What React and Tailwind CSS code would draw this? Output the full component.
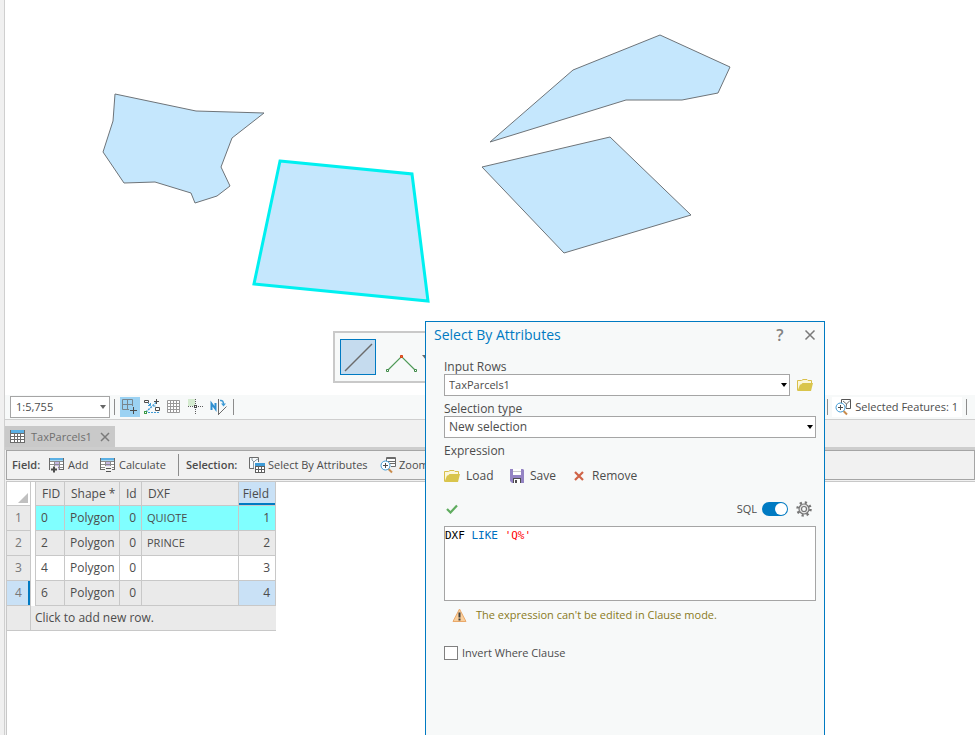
import { useState } from 'react';

const rows = [
  { fid: 0, shape: 'Polygon', id: 0, dxf: 'QUIOTE', field: 1 },
  { fid: 2, shape: 'Polygon', id: 0, dxf: 'PRINCE', field: 2 },
  { fid: 4, shape: 'Polygon', id: 0, dxf: '', field: 3 },
  { fid: 6, shape: 'Polygon', id: 0, dxf: '', field: 4 },
];

const rowColors = ['bg-[#80ffff]', 'bg-[#eaeaea]', 'bg-white', 'bg-[#eaeaea]'];

/* ---------- Icons ---------- */

const TableGrid = () => (
  <svg width="15" height="13" viewBox="0 0 15 13" aria-hidden="true">
    <rect x="0.5" y="0.5" width="14" height="12" fill="#fff" stroke="#6b6b6b" />
    <rect x="1" y="0" width="13" height="3" fill="#5bb0e4" />
    <path d="M0 3.5h15M1 6.5h13M1 9.5h13M4.5 4v9M7.5 4v9M10.5 4v9" stroke="#6b6b6b" />
  </svg>
);

const FieldIcon = ({ children }) => (
  <svg width="16" height="16" viewBox="0 0 16 16" aria-hidden="true">
    <rect x="0.5" y="1.5" width="14" height="11" fill="#fff" stroke="#6b6b6b" />
    <rect x="6" y="4" width="4" height="9" fill="#c5b6e3" />
    <rect x="1" y="1" width="13" height="2.5" fill="#5bb0e4" />
    <path d="M1 4.5h13M1 7.5h13M1 10.5h13M5.5 4v8M10.5 4v8" stroke="#8b8b8b" />
    {children}
  </svg>
);

const AddFieldIcon = () => (
  <FieldIcon>
    <path d="M1 9h8v7H1z" fill="#f1f1f1" />
    <path d="M5 9.5v6M2 12.5h6" stroke="#4c4c4c" strokeWidth="2" />
  </FieldIcon>
);

const CalculateIcon = () => (
  <FieldIcon>
    <path d="M5 9h7v7H5z" fill="#f1f1f1" />
    <path d="M6 11.5h5M6 14.5h5" stroke="#555" />
  </FieldIcon>
);

const SelectAttributesIcon = () => (
  <svg width="17" height="16" viewBox="0 0 17 16" aria-hidden="true">
    <path d="M5 11.5H0.5V0.5h9V5" fill="#f8fafb" stroke="#6b6b6b" />
    <path d="M3 1v2l2 2 2-2 2-1M4.500 5v6" fill="none" stroke="#8a9aa5" />
    <rect x="6.500" y="6.500" width="9" height="9" fill="#fff" stroke="#5f5f5f" />
    <rect x="6" y="6" width="10" height="3" fill="#3f9bd6" />
    <path d="M6 9.500h10M7 12.500h9M9.500 9v7M12.500 9v7" stroke="#5f5f5f" />
  </svg>
);

const Magnifier = () => (
  <>
    <path d="M8.500 12l3.500 3.500" stroke="#c98b4c" strokeWidth="2" />
    <circle cx="5.500" cy="8.500" r="4.500" fill="#fff" stroke="#3f9bd6" />
    <path d="M5.500 6v5M3 8.500h5" stroke="#4c4c4c" />
  </>
);

const ZoomTableIcon = () => (
  <svg width="17" height="17" viewBox="0 0 17 17" aria-hidden="true">
    <path d="M6.500 4V0.500h9v9H11" fill="#fff" stroke="#6b6b6b" />
    <path d="M7 1.500h8M8 4.500h7M10 6.500h5" stroke="#6b6b6b" />
    <Magnifier />
  </svg>
);

const ZoomSelectedIcon = () => (
  <svg width="17" height="17" viewBox="0 0 17 17" aria-hidden="true">
    <path d="M6.500 4V0.500h9v9H11" fill="#fff" stroke="#555" />
    <path d="M8 2l3.500 3L15 1.500M11.500 5L11 9" fill="none" stroke="#6b6b6b" />
    <Magnifier />
  </svg>
);

const SnapGridIcon = () => (
  <svg width="16" height="16" viewBox="0 0 16 16" aria-hidden="true">
    <path d="M0.500 0.500h10v10h-10zM5.500 0.500v10M0.500 5.500h10" fill="none" stroke="#78858d" />
    <path d="M7 7h9v9H7z" fill="#9bd2f3" />
    <path d="M11.500 8v7M8 11.500h7" stroke="#4c4c4c" />
  </svg>
);

const ConstraintIcon = () => (
  <svg width="16" height="16" viewBox="0 0 16 16" aria-hidden="true">
    <path d="M2 13L12 3.500" stroke="#3f9bd6" strokeWidth="1.500" strokeDasharray="2 1" />
    <path d="M4 4l2.500 2.500M6.500 4v2.500H4M9 7h2.500" fill="none" stroke="#3f9bd6" />
    <path d="M4 13.500h11" stroke="#3f9bd6" strokeDasharray="2 1" />
    <path d="M0.500 1.500h4v2h-4zM11.500 8.500h4v3h-4z" fill="#fff" stroke="#4c4c4c" />
    <path d="M12.500 0v5M10 2.500h5" stroke="#4c4c4c" />
    <rect x="0.500" y="12.500" width="2" height="2" fill="#fff" stroke="#3c9a48" />
  </svg>
);

const GridIcon = () => (
  <svg width="14" height="14" viewBox="0 0 14 14" aria-hidden="true">
    <path
      d="M0.500 0.500h12v12h-12zM3.500 0.500v12M6.500 0.500v12M9.500 0.500v12M0.500 3.500h12M0.500 6.500h12M0.500 9.500h12"
      fill="#fff"
      stroke="#999"
    />
  </svg>
);

const CrosshairIcon = () => (
  <svg width="16" height="16" viewBox="0 0 16 16" aria-hidden="true">
    <rect x="0" y="0" width="7" height="7" fill="#d5ecd0" />
    <path d="M7.500 0v16M0 7.500h16" stroke="#5c5c5c" strokeDasharray="1 1" />
    <rect x="6.500" y="6.500" width="2" height="2" fill="#fff" stroke="#4c4c4c" />
  </svg>
);

const NorthIcon = () => (
  <svg width="18" height="16" viewBox="0 0 18 16" aria-hidden="true">
    <path d="M1.500 11V4.500L5.500 10V4" fill="none" stroke="#2f8fd0" strokeWidth="2" />
    <path d="M8.500 0v16" stroke="#6b6b6b" />
    <path d="M9 15L16.500 7.500" stroke="#6b6b6b" />
    <path d="M10 1.500c2.500-.5 3.500 1 3.500 4" fill="none" stroke="#3f9bd6" strokeWidth="1.500" />
    <path d="M11 4.500h5L13.500 7.500z" fill="#3f9bd6" />
  </svg>
);

const FolderIcon = () => (
  <svg width="16" height="13" viewBox="0 0 16 13" aria-hidden="true">
    <path d="M0.500 11.500V1.500H4.500l1.500-1h4l1 1h3.500v3" fill="#fbf7dc" stroke="#d9c04a" />
    <path d="M4 5.500l1.500-1.500H16l-2 8H0.500L3 5.500z" fill="#d9c54c" />
  </svg>
);

const SaveIcon = () => (
  <svg width="14" height="14" viewBox="0 0 14 14" aria-hidden="true">
    <path d="M0 0h13l1 1v13H2l-2-2z" fill="#9484c4" />
    <rect x="3" y="0" width="8" height="6" fill="#fff" />
    <path d="M3 2.500h8" stroke="#c9c9c9" />
    <rect x="3" y="9" width="8" height="5" fill="#4f4f4f" />
    <rect x="4" y="10" width="6" height="4" fill="#fff" />
    <rect x="5" y="11" width="2" height="3" fill="#4f4f4f" />
  </svg>
);

const GearIcon = () => (
  <svg width="16" height="16" viewBox="0 0 16 16" aria-hidden="true">
    <circle cx="8" cy="8" r="6.500" fill="none" stroke="#757575" strokeWidth="2.500" strokeDasharray="2.200 2.905" />
    <circle cx="8" cy="8" r="5" fill="#e4e4e4" stroke="#757575" strokeWidth="1.200" />
    <circle cx="8" cy="8" r="2.500" fill="#f7f9f9" stroke="#757575" strokeWidth="1.200" />
  </svg>
);

const WarningIcon = () => (
  <svg width="15" height="15" viewBox="0 0 15 15" aria-hidden="true">
    <path d="M7.500 1L14 13.500H1z" fill="#fbcf9b" stroke="#e9a96b" strokeLinejoin="round" />
    <path d="M7.500 4.500v5M7.500 10.500v2" stroke="#3f3f3f" strokeWidth="2" />
  </svg>
);

const Caret = ({ className }) => (
  <svg
    width="6"
    height="4"
    viewBox="0 0 6 4"
    className={`absolute top-1/2 -translate-y-1/2 pointer-events-none ${className}`}
    aria-hidden="true"
  >
    <path d="M0 0h6L3 4z" fill="currentColor" />
  </svg>
);

const Divider = ({ className = 'h-4' }) => <span className={`w-px bg-[#8c8c8c] ${className}`} />;

/* ---------- Map ---------- */

const MapView = () => (
  <div className="flex-1 min-h-0 bg-white">
    <svg
      className="block w-full h-full"
      viewBox="5 0 970 395"
      preserveAspectRatio="xMinYMin meet"
      role="img"
      aria-label="Parcels map"
    >
      <g fill="#c5e7fd" stroke="#6e7479" strokeWidth="1">
        <polygon points="115,94 196,111 264,113 232,138 221,167 230,186 217,196 195,203 191,193 155,182 124,183 103,152 113,121" />
        <polygon points="490,142 573,70 660,35 730,67 718,93 682,100 626,100" />
        <polygon points="482,167 610,137 691,215 564,253" />
      </g>
      <polygon points="280,161 412,174 428,301 254,284" fill="#c5e7fd" stroke="#00f0f0" strokeWidth="3" />
    </svg>
  </div>
);

const SketchToolbar = () => (
  <div className="absolute left-[333px] top-[331px] flex items-center gap-2 w-32 h-[52px] px-[5px] bg-[#f7f9f9] border-2 border-[#c9c9c9]">
    <button aria-label="Line" className="w-9 h-9 shrink-0 bg-[#c5dbee] border border-[#007ac2]">
      <svg width="34" height="34" viewBox="0 0 34 34">
        <path d="M4 31L31 4" stroke="#6b6b6b" strokeWidth="1.500" />
      </svg>
    </button>
    <button aria-label="Vertices" className="shrink-0 pt-3">
      <svg width="34" height="20" viewBox="0 0 34 20">
        <path d="M3.500 17.500l14-14 14 14" fill="none" stroke="#4f9a58" strokeWidth="1.200" />
        <path d="M2.500 16.500h2v2h-2zM30.500 16.500h2v2h-2z" fill="#fff" stroke="#3f8a48" />
        <path d="M16.500 2.500h2v2h-2z" fill="#e86a3a" stroke="#d84315" />
      </svg>
    </button>
    <svg width="8" height="5" viewBox="0 0 8 5" className="shrink-0 -ml-1">
      <path d="M0 0h8L4 5z" fill="#6b6b6b" />
    </svg>
  </div>
);

const StatusBar = () => (
  <div className="flex items-center h-[25px] pl-[5px] pr-2 bg-[#f7f9f9] border-b border-[#cfcfcf] text-[11px]">
    <div className="relative w-[100px] shrink-0">
      <select
        aria-label="Map scale"
        className="block w-full h-[22px] pl-[5px] appearance-none bg-white border border-[#a5a5a5]"
      >
        <option>1:5,755</option>
      </select>
      <Caret className="right-1 text-[#666]" />
    </div>
    <div className="flex items-center ml-1">
      <Divider />
      <button aria-label="Snapping" className="flex items-center justify-center w-5 h-5 ml-[5px] bg-[#9bd2f3]">
        <SnapGridIcon />
      </button>
      <button aria-label="Dynamic constraints" className="ml-1">
        <ConstraintIcon />
      </button>
      <button aria-label="Grid" className="ml-[7px]">
        <GridIcon />
      </button>
      <button aria-label="Inference" className="ml-[7px]">
        <CrosshairIcon />
      </button>
      <button aria-label="Correction" className="ml-[6px]">
        <NorthIcon />
      </button>
      <Divider className="h-4 ml-[5px]" />
    </div>
    <div className="flex items-center ml-auto gap-1">
      <Divider />
      <button className="flex items-center gap-[3px] h-5 pl-[3px] pr-1 bg-white">
        <ZoomSelectedIcon />
        Selected Features: 1
      </button>
      <Divider />
    </div>
  </div>
);

/* ---------- Attribute table ---------- */

const TableToolbar = () => (
  <div className="flex items-center h-[30px] pl-[5px] border border-[#a5a5a5] overflow-hidden whitespace-nowrap text-[11px]">
    <span className="w-[37px] shrink-0 font-semibold">Field:</span>
    <button className="flex items-center gap-[3px] w-[51px] shrink-0">
      <AddFieldIcon />
      Add
    </button>
    <button className="flex items-center gap-[3px] w-[78px] shrink-0">
      <CalculateIcon />
      Calculate
    </button>
    <Divider className="h-[22px] shrink-0" />
    <span className="w-[63px] ml-[7px] shrink-0 font-semibold">Selection:</span>
    <button className="flex items-center gap-0.5 w-[131px] shrink-0">
      <SelectAttributesIcon />
      Select By Attributes
    </button>
    <button className="flex items-center gap-0.5 shrink-0">
      <ZoomTableIcon />
      Zoom To
    </button>
  </div>
);

const cell = 'border-r border-b border-[#c8c8c8] p-0';

const AttributeTable = () => (
  <table className="table-fixed w-[269px] border-separate border-spacing-0">
    <colgroup>
      <col className="w-6" />
      <col className="w-[5px]" />
      <col className="w-[29px]" />
      <col className="w-[55px]" />
      <col className="w-[22px]" />
      <col className="w-[97px]" />
      <col className="w-[37px]" />
    </colgroup>
    <thead>
      <tr className="h-6 bg-[#eaeaea] text-left">
        <th className={`${cell} bg-white align-bottom`}>
          <svg width="10" height="10" viewBox="0 0 10 10" className="ml-auto mr-0.5 mb-0.5" aria-hidden="true">
            <path d="M10 0v10H0z" fill="#c0c0c0" />
          </svg>
        </th>
        <th className="p-0 bg-white border-r border-[#c8c8c8]" />
        <th className={`${cell} pl-1.5 font-normal`}>FID</th>
        <th className={`${cell} pl-1.5 font-normal`}>Shape *</th>
        <th className={`${cell} pl-1.5 font-normal`}>Id</th>
        <th className={`${cell} pl-1.5 font-normal`}>DXF</th>
        <th className={`${cell} pr-1.5 font-normal text-right bg-[#c9e1f6] shadow-[inset_0_-2px_0_#007ac2]`}>
          Field
        </th>
      </tr>
    </thead>
    <tbody>
      {rows.map((row, i) => {
        const current = i === rows.length - 1;
        return (
          <tr key={row.fid} className={`h-[25px] ${rowColors[i]}`}>
            <th
              className={`${cell} font-normal text-center text-[#777] ${
                current ? 'bg-[#c9e1f6] shadow-[inset_-2px_0_0_#007ac2]' : 'bg-[#eaeaea]'
              }`}
            >
              {i + 1}
            </th>
            <td className="p-0 bg-white border-r border-[#c8c8c8]" />
            <td className={`${cell} pl-[5px]`}>{row.fid}</td>
            <td className={`${cell} pl-[5px]`}>{row.shape}</td>
            <td className={`${cell} pr-[5px] text-right`}>{row.id}</td>
            <td className={`${cell} pl-[5px] text-[11px]`}>{row.dxf}</td>
            <td className={`${cell} pr-[5px] text-right ${current ? 'bg-[#c9e1f6]' : ''}`}>{row.field}</td>
          </tr>
        );
      })}
      <tr className="h-[25px] bg-[#eaeaea]">
        <td className={cell} />
        <td colSpan={6} className="p-0 pl-1 border-b border-[#c8c8c8]">
          Click to add new row.
        </td>
      </tr>
    </tbody>
  </table>
);

const TablePane = () => (
  <section className="flex flex-col flex-[3] min-h-0 bg-[#f1f1f1]">
    <div className="flex mt-1.5 border-b-3 border-[#cdcdcd]">
      <div className="flex items-center h-[21px] px-[5px] bg-[#c9c9c9] text-[11px] text-[#6f6f6f]">
        <TableGrid />
        <span className="ml-1.5 mr-2">TaxParcels1</span>
        <button aria-label="Close table">
          <svg width="10" height="10" viewBox="0 0 10 10">
            <path d="M1 1l8 8M9 1l-8 8" stroke="#7a7a7a" strokeWidth="1.500" />
          </svg>
        </button>
      </div>
    </div>
    <div className="flex flex-col flex-1 min-h-0 pl-px">
      <TableToolbar />
      <div className="flex-1 mt-px bg-white border-t border-l border-[#c8c8c8] overflow-hidden">
        <AttributeTable />
      </div>
    </div>
  </section>
);

/* ---------- Select By Attributes dialog ---------- */

const SelectDialog = () => {
  const [expression, setExpression] = useState("DXF LIKE 'Q%'");
  const [sql, setSql] = useState(true);
  const [invert, setInvert] = useState(false);

  const highlight = (text) =>
    text.split(/('[^']*'|\bLIKE\b)/).map((part, i) => {
      if (part === 'LIKE') return <span key={i} className="text-[#0070c0]">{part}</span>;
      if (part.startsWith("'")) return <span key={i} className="text-[#ff0000]">{part}</span>;
      return part;
    });

  return (
    <div
      role="dialog"
      aria-labelledby="dialog-title"
      className="absolute left-[425px] top-[321px] -bottom-px w-[400px] bg-[#f7f9f9] border border-[#007ac2]"
    >
      <div className="flex items-center h-[26px] pl-2 pr-2">
        <h2 id="dialog-title" className="text-[14px] text-[#007ac2]">
          Select By Attributes
        </h2>
        <button aria-label="Help" className="ml-auto w-4 text-[16px] leading-5 font-semibold text-[#828282]">
          ?
        </button>
        <button aria-label="Close" className="ml-4">
          <svg width="12" height="12" viewBox="0 0 12 12">
            <path d="M1.500 1.500l9 9M10.500 1.500l-9 9" stroke="#7a7a7a" strokeWidth="1.500" />
          </svg>
        </button>
      </div>

      <div className="pl-[18px] pr-2 pt-[11px]">
        <label htmlFor="input-rows" className="block h-[15px] leading-4">
          Input Rows
        </label>
        <div className="flex items-center gap-[7px]">
          <div className="relative w-[346px]">
            <select
              id="input-rows"
              className="block w-full h-[22px] pl-1 appearance-none bg-white border border-[#a5a5a5] text-[11px]"
            >
              <option>TaxParcels1</option>
            </select>
            <Caret className="right-[3px] text-black" />
          </div>
          <button aria-label="Browse">
            <FolderIcon />
          </button>
        </div>

        <label htmlFor="selection-type" className="block h-5 pt-[5px] leading-4">
          Selection type
        </label>
        <div className="relative w-[372px]">
          <select
            id="selection-type"
            className="block w-full h-[22px] pl-1 appearance-none bg-white border border-[#a5a5a5]"
          >
            <option>New selection</option>
          </select>
          <Caret className="right-[3px] text-black" />
        </div>

        <p className="pt-[5px] leading-4">Expression</p>
        <div className="flex items-center h-4 mt-[9px]">
          <button className="flex items-center gap-1.5 w-[66px]">
            <FolderIcon />
            Load
          </button>
          <button className="flex items-center gap-1.5 w-16">
            <SaveIcon />
            Save
          </button>
          <button className="flex items-center gap-2">
            <svg width="10" height="10" viewBox="0 0 10 10" aria-hidden="true">
              <path d="M1 1l8 8M9 1l-8 8" stroke="#cf6347" strokeWidth="2.200" />
            </svg>
            Remove
          </button>
        </div>

        <div className="flex items-center w-[372px] h-5 mt-[15px] pl-0.5 pr-1">
          <svg width="12" height="10" viewBox="0 0 12 10" aria-label="Valid expression">
            <path d="M1 5l3.500 3.500L11 1.500" fill="none" stroke="#5fac5f" strokeWidth="2.200" />
          </svg>
          <label htmlFor="sql-mode" className="ml-auto mr-[5px] text-[11px]">
            SQL
          </label>
          <input
            id="sql-mode"
            type="checkbox"
            checked={sql}
            onChange={(e) => setSql(e.target.checked)}
            className="appearance-none flex items-center w-[26px] h-3.5 p-px rounded-full bg-[#9a9a9a] checked:bg-[#007ac2] before:block before:w-3 before:h-3 before:rounded-full before:bg-white checked:before:ml-auto"
          />
          <button aria-label="Options" className="ml-2">
            <GearIcon />
          </button>
        </div>

        {/* highlighted text sits under a transparent textarea */}
        <div className="relative w-[372px] h-[75px] mt-[7px] bg-white border border-[#a5a5a5] font-['DejaVu_Sans_Mono',monospace] text-[11px] leading-4 text-black">
          <pre aria-hidden="true" className="pt-px font-[inherit]">
            {highlight(expression)}
          </pre>
          <textarea
            aria-label="Expression"
            spellCheck={false}
            value={expression}
            onChange={(e) => setExpression(e.target.value)}
            className="absolute inset-0 w-full h-full pt-px resize-none bg-transparent text-transparent caret-black outline-none"
          />
        </div>

        <div className="flex items-center gap-[9px] mt-1.5 pl-2 leading-4 text-[11px] text-[#8a7a1c]">
          <WarningIcon />
          The expression can&apos;t be edited in Clause mode.
        </div>

        <label className="flex items-center gap-1 mt-[22px] leading-4 text-[11px]">
          <input
            type="checkbox"
            checked={invert}
            onChange={(e) => setInvert(e.target.checked)}
            className="appearance-none w-3.5 h-3.5 bg-white border border-[#808080] checked:bg-[#007ac2]"
          />
          Invert Where Clause
        </label>
      </div>
    </div>
  );
};

const App = () => {
  return (
    <div className="relative flex flex-col h-screen overflow-hidden pl-1 bg-[#f0f0f0] font-['Open_Sans','Noto_Sans',sans-serif] text-[12px] leading-4 text-[#4c4c4c]">
      <div className="flex flex-col flex-1 min-h-0 border-l border-[#cfcfcf]">
        <section className="flex flex-col flex-[4] min-h-0">
          <MapView />
          <StatusBar />
        </section>
        <TablePane />
      </div>
      <SketchToolbar />
      <SelectDialog />
    </div>
  );
};

export default App;
